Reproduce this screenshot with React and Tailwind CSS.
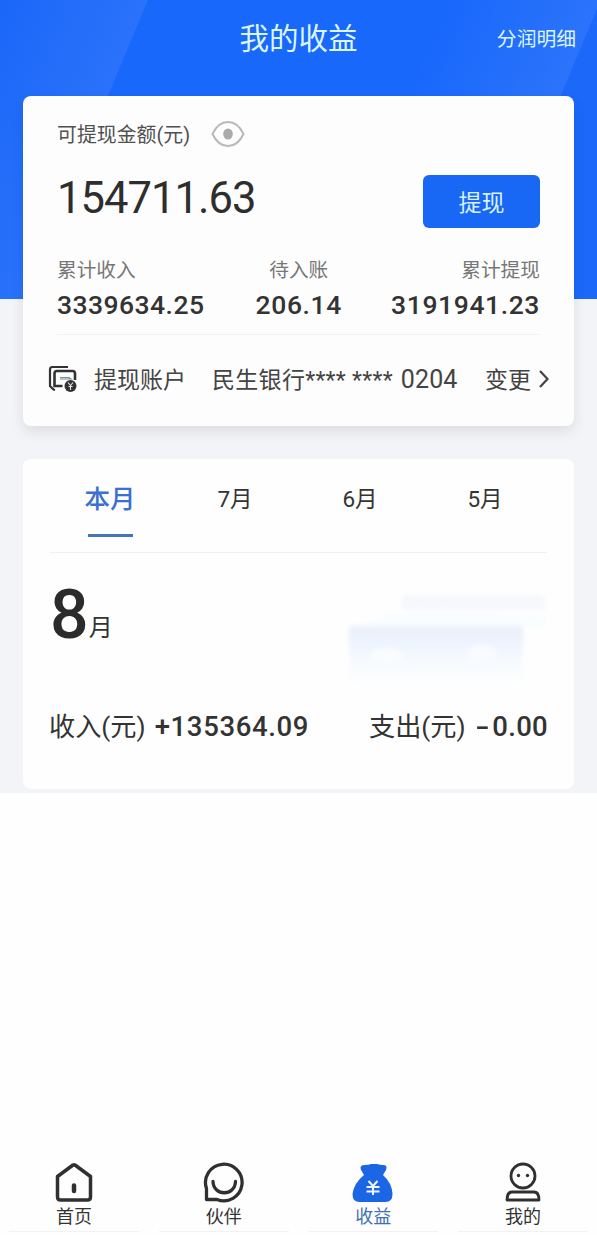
import React, { useState } from 'react';

const totals = [
  { label: '累计收入', value: '3339634.25', align: 'items-start', offset: 'tracking-[0.450px]' },
  { label: '待入账', value: '206.14', align: 'items-center pl-0.5', offset: 'tracking-[0.600px]' },
  { label: '累计提现', value: '3191941.23', align: 'items-end', offset: 'tracking-[0.600px]' },
];

const months = ['本月', '7月', '6月', '5月'];

const EyeIcon = () => (
  <svg width="34" height="28" viewBox="0 0 34 28" fill="none">
    <path d="M1.500 14C5 6.500 10.500 2 17 2s12 4.500 15.500 12C29 21.500 23.500 26 17 26S5 21.500 1.500 14Z" stroke="#b9b9b9" strokeWidth="2" />
    <ellipse cx="17" cy="14" rx="4.800" ry="5.500" fill="#aaaaaa" />
  </svg>
);

const AccountIcon = () => (
  <svg width="29" height="28" viewBox="0 0 29 28" fill="none" stroke="#333" strokeWidth="2.200">
    <path d="M20 2H4.500Q2 2 2 4.500V21l3.500 3.500L7 25" />
    <path d="M14.500 21H6.500V8.500Q6.500 6 9 6h15.500Q27 6 27 8.500V15" strokeWidth="2.600" />
    <path d="M12 12.500h9l2 1.500H12" stroke="#71929b" strokeWidth="1.200" />
    <circle cx="22.500" cy="21" r="6" fill="#333" stroke="none" />
    <path d="m20 17.500 2.500 3 2.500-3M22.500 20.500V25M20.500 21.500h4" stroke="#e5e5e5" strokeWidth="1.100" />
  </svg>
);

const HomeIcon = () => (
  <svg width="40" height="42" viewBox="0 0 40 42" fill="none" stroke="#303030" strokeWidth="3.500" strokeLinejoin="round" strokeLinecap="round">
    <path d="M3.500 15.500 19 4Q20 3.500 21 4L36.500 15.500V36q0 3-3 3H6.500q-3 0-3-3Z" />
    <path d="M20 24.500v5.500" strokeWidth="4.500" />
  </svg>
);

const PartnerIcon = () => (
  <svg width="42" height="42" viewBox="0 0 42 42" fill="none" stroke="#303030" strokeWidth="3.300" strokeLinejoin="round" strokeLinecap="round">
    <path d="M3.500 38.500V27.500A18.300 18.300 0 1 1 14 38.500Z" />
    <path d="M10 20.500c.5 15 22 15 22.500 0" />
  </svg>
);

const BagIcon = () => (
  <svg width="42" height="42" viewBox="0 0 42 42">
    <path d="M12 14 9 9q-2-5 4-5 4 0 6-1h6q3 1 6 1 5 0 3 5l-3 5q9 8 9.500 19 0 8-7 8h-26q-7 0-7-8Q2 22 12 14Z" fill="#1b66e5" />
    <path d="m16.500 20 4.500 5 4.500-5M14.500 26h13M14.500 30.500h13M21 25v9" fill="none" stroke="#eff6ff" strokeWidth="2" />
  </svg>
);

const ProfileIcon = () => (
  <svg width="36" height="42" viewBox="0 0 36 42" fill="none" stroke="#303030" strokeWidth="2.800" strokeLinejoin="round">
    <circle cx="18" cy="15" r="12" />
    <circle cx="13.500" cy="14.500" r="1.700" fill="#303030" stroke="none" />
    <circle cx="22.500" cy="14.500" r="1.700" fill="#303030" stroke="none" />
    <path d="M7 31h22q5 0 5 8H2q0-8 5-8Z" />
  </svg>
);

const tabs = [
  { label: '首页', icon: HomeIcon },
  { label: '伙伴', icon: PartnerIcon },
  { label: '收益', icon: BagIcon, active: true },
  { label: '我的', icon: ProfileIcon },
];

const BalanceCard = () => {
  const [visible, setVisible] = useState(true);

  return (
    <section className="mx-[23px] h-[330px] rounded-lg bg-[#fdfdfd] shadow-[0_6px_14px_rgba(0,0,0,0.09)]">
      <div className="flex h-[75px] items-center gap-[21px] pl-[34px]">
        <span className="pt-1 text-[19.900px] text-[#505050]">可提现金额(元)</span>
        <button onClick={() => setVisible(!visible)}><EyeIcon /></button>
      </div>
      <div className="flex h-[60px] items-center justify-between px-[34px]">
        <span className="pb-[5px] text-[43.500px] leading-none tracking-[-0.950px] text-[#2e2e2e]">
          {visible ? '154711.63' : '******'}
        </span>
        <button className="h-[53px] w-[117px] rounded-md bg-[#1967f5] pt-1.5 text-[23px] text-[#d9f3ff]">提现</button>
      </div>
      <div className="mx-[34px] flex h-[104px] justify-between border-b border-[#f2f2f2] pt-[27px]">
        {totals.map((t) => (
          <div key={t.label} className={`flex flex-col ${t.align}`}>
            <span className="text-[19.700px] leading-[26px] text-[#777]">{t.label}</span>
            <span className={`text-[26.500px] font-medium leading-[41px] text-[#333] ${t.offset}`}>{t.value}</span>
          </div>
        ))}
      </div>
      <div className="flex h-[88px] items-center whitespace-nowrap pl-[25px] text-[23px] text-[#444]">
        <AccountIcon />
        <span className="ml-[17px] pt-1">提现账户</span>
        <span className="ml-[26px] w-[247px] pt-0.5 tracking-[0.300px]">民生银行**** **** <span className="ml-0.5 text-[25px] tracking-[0.100px]">0204</span></span>
        <span className="ml-[26px] pt-1">变更</span>
        <svg className="ml-[7px]" width="12" height="20" viewBox="0 0 12 20" fill="none" stroke="#444" strokeWidth="2.200">
          <path d="m2 2 7.500 8L2 18" />
        </svg>
      </div>
    </section>
  );
};

const MonthCard = () => {
  const [month, setMonth] = useState('本月');

  return (
    <section className="mx-[23px] mt-[33px] h-[330px] rounded-lg bg-[#fefefe] px-[27px] text-[#333]">
      <div className="flex h-[94px] justify-between border-b border-[#f0f0f0] pl-[24px] pr-[26px]">
        {months.map((m) => (
          <button key={m} onClick={() => setMonth(m)} className="flex w-[72px] flex-col items-center">
            <span className={m === month ? 'h-[75px] text-[25.500px] font-medium leading-[80px] text-[#3a70cf]' : 'h-[75px] text-[22.500px] leading-[80px]'}>{m}</span>
            {m === month && <span className="h-[3px] w-[45px] bg-[#4475b5]" />}
          </button>
        ))}
      </div>
      <div className="flex h-[136px] justify-between">
        <div className="flex items-baseline">
          <span className="text-[68px] font-medium leading-[124px] text-[#2b2b2b]">8</span>
          <span className="-translate-y-0.5 text-[24px]">月</span>
        </div>
        {/* faded card artwork */}
        <svg width="205" height="110" viewBox="0 0 205 110" className="mt-[30px]">
          <defs>
            <linearGradient id="fade" x1="0" y1="0" x2="0" y2="1">
              <stop offset="0" stopColor="#e9f0f7" />
              <stop offset=".25" stopColor="#edf3fd" />
              <stop offset=".6" stopColor="#f6fafe" />
              <stop offset="1" stopColor="#fefefe" />
            </linearGradient>
            <filter id="soft"><feGaussianBlur stdDeviation="2.500" /></filter>
          </defs>
          <g filter="url(#soft)">
            <rect x="60" y="12" width="143" height="15" fill="#f7f8fd" />
            <path d="M50 30q85-2 155 5v8H20Z" fill="#f8fdff" />
            <rect x="7" y="43" width="174" height="58" fill="url(#fade)" />
            <ellipse cx="45" cy="72" rx="16" ry="7" fill="#f9fdfe" />
            <ellipse cx="140" cy="70" rx="14" ry="9" fill="#f8fcff" />
          </g>
        </svg>
      </div>
      <div className="-mx-px flex h-[76px] items-center justify-between whitespace-nowrap text-[26.200px]">
        <span>收入(元)<span className="ml-[9px] text-[27.500px] font-medium tracking-[0.650px]">+135364.09</span></span>
        <span>支出(元)<span className="ml-[12px] text-[27.500px] font-medium tracking-[0.300px]"><span className="mr-[5px] inline-block scale-x-150">-</span>0.00</span></span>
      </div>
    </section>
  );
};

const App = () => (
  <div className="flex h-[1235px] w-[597px] flex-col overflow-hidden bg-[#fefefe] font-['Roboto','Noto_Sans_CJK_SC',sans-serif]">
    <main className="h-[793px] bg-[linear-gradient(to_bottom,transparent_299px,#f3f4f7_299px),linear-gradient(112.600deg,#1b67f8_0px,#2a72fb_136px,#1968fc_137px,#1968fc_410px,#2b73fa_554px,#1b68f9_555px)]">
      <header className="grid h-[96px] grid-cols-[1fr_auto_1fr] items-center pb-[17px] text-[#dcf6ff]">
        <span />
        <h1 className="text-[29.500px]">我的收益</h1>
        <span className="justify-self-end pr-[21px] text-[19.800px]">分润明细</span>
      </header>
      <BalanceCard />
      <MonthCard />
    </main>
    <nav className="mt-auto flex h-[74px] justify-between px-[34px]">
      {tabs.map(({ label, icon: Icon, active }) => (
        <a key={label} className="flex w-[80px] flex-col items-center">
          <Icon />
          <span className={active ? 'pt-px text-[18px] leading-[26px] text-[#3e70b5]' : 'pt-px text-[18px] leading-[26px] text-[#333]'}>{label}</span>
          <span className="mt-px h-px w-[130px] bg-[#f2f2f2]" />
        </a>
      ))}
    </nav>
  </div>
);

export default App;
